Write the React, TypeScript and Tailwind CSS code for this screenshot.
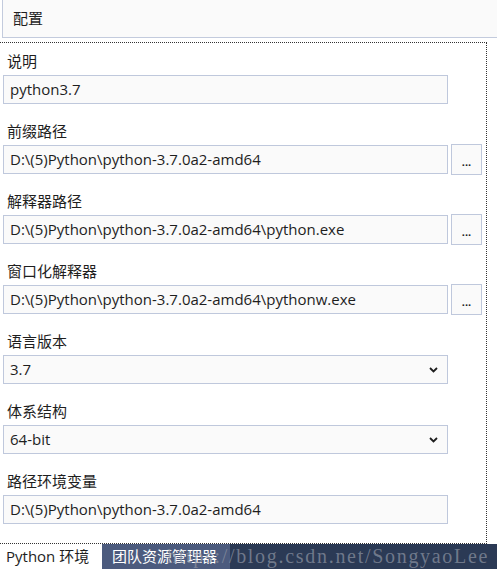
import React from "react";

const ui = { fontFamily: '"Open Sans", "Noto Sans CJK SC", sans-serif' };

type Field = { label: string; value: string; kind: "text" | "browse" | "select" };

const fields: Field[] = [
  { label: "说明", value: "python3.7", kind: "text" },
  { label: "前缀路径", value: "D:\\(5)Python\\python-3.7.0a2-amd64", kind: "browse" },
  { label: "解释器路径", value: "D:\\(5)Python\\python-3.7.0a2-amd64\\python.exe", kind: "browse" },
  { label: "窗口化解释器", value: "D:\\(5)Python\\python-3.7.0a2-amd64\\pythonw.exe", kind: "browse" },
  { label: "语言版本", value: "3.7", kind: "select" },
  { label: "体系结构", value: "64-bit", kind: "select" },
  { label: "路径环境变量", value: "D:\\(5)Python\\python-3.7.0a2-amd64", kind: "text" },
];

function Chevron() {
  return (
    <svg width="9" height="6" viewBox="0 0 9 6" className="shrink-0">
      <path d="M1 1 L4.5 4.5 L8 1" fill="none" stroke="#1e1e1e" strokeWidth="1.8" />
    </svg>
  );
}

export default function App() {
  return (
    <div className="w-[497px] h-[569px] bg-white text-[#1e1e1e] text-[15px] flex flex-col overflow-hidden" style={ui}>
      {/* header */}
      <div className="h-[38px] ml-[2px] shrink-0 bg-[#fafafa] border-l border-b border-[#c3cbdd] flex items-center pl-[10px]">
        配置
      </div>

      {/* settings panel */}
      <div className="mt-[4px] w-[487px] h-[502px] shrink-0 border-t border-r border-b border-dotted border-[#333] pt-[8px] pl-[3px]">
        {fields.map((f) => (
          <div key={f.label} className="mb-[17px]">
            <div className="h-[20px] leading-[20px] pl-[4px] mb-[4px]">{f.label}</div>
            <div className="h-[29px] flex items-center gap-[3px]">
              <div className="w-[445px] h-[29px] bg-[#fafafa] border border-[#bfc8dc] flex items-center justify-between pl-[6px] pr-[9px]">
                <span className="whitespace-nowrap">{f.value}</span>
                {f.kind === "select" && <Chevron />}
              </div>
              {f.kind === "browse" && (
                <div className="w-[31px] h-[31px] shrink-0 bg-[#fafafa] border border-[#bfc8dc] flex items-center justify-center text-[11px] font-bold leading-none pt-[4px]">
                  ...
                </div>
              )}
            </div>
          </div>
        ))}
      </div>

      {/* bottom tabs */}
      <div className="relative flex-1 flex bg-[#2b3a55]">
        <div className="bg-white w-[102px] pl-[6px] flex items-center">Python 环境</div>
        <div className="bg-[#4c5b7e] text-white w-[128px] pl-[10px] flex items-center">团队资源管理器</div>
        <div
          className="absolute left-[167px] top-[0px] text-[20px] leading-[24px] text-[#8e95a3]/70 whitespace-nowrap pointer-events-none"
          style={{ fontFamily: '"Liberation Serif", serif', letterSpacing: "1.7px" }}
        >
          https://blog.csdn.net/SongyaoLee
        </div>
      </div>
    </div>
  );
}
